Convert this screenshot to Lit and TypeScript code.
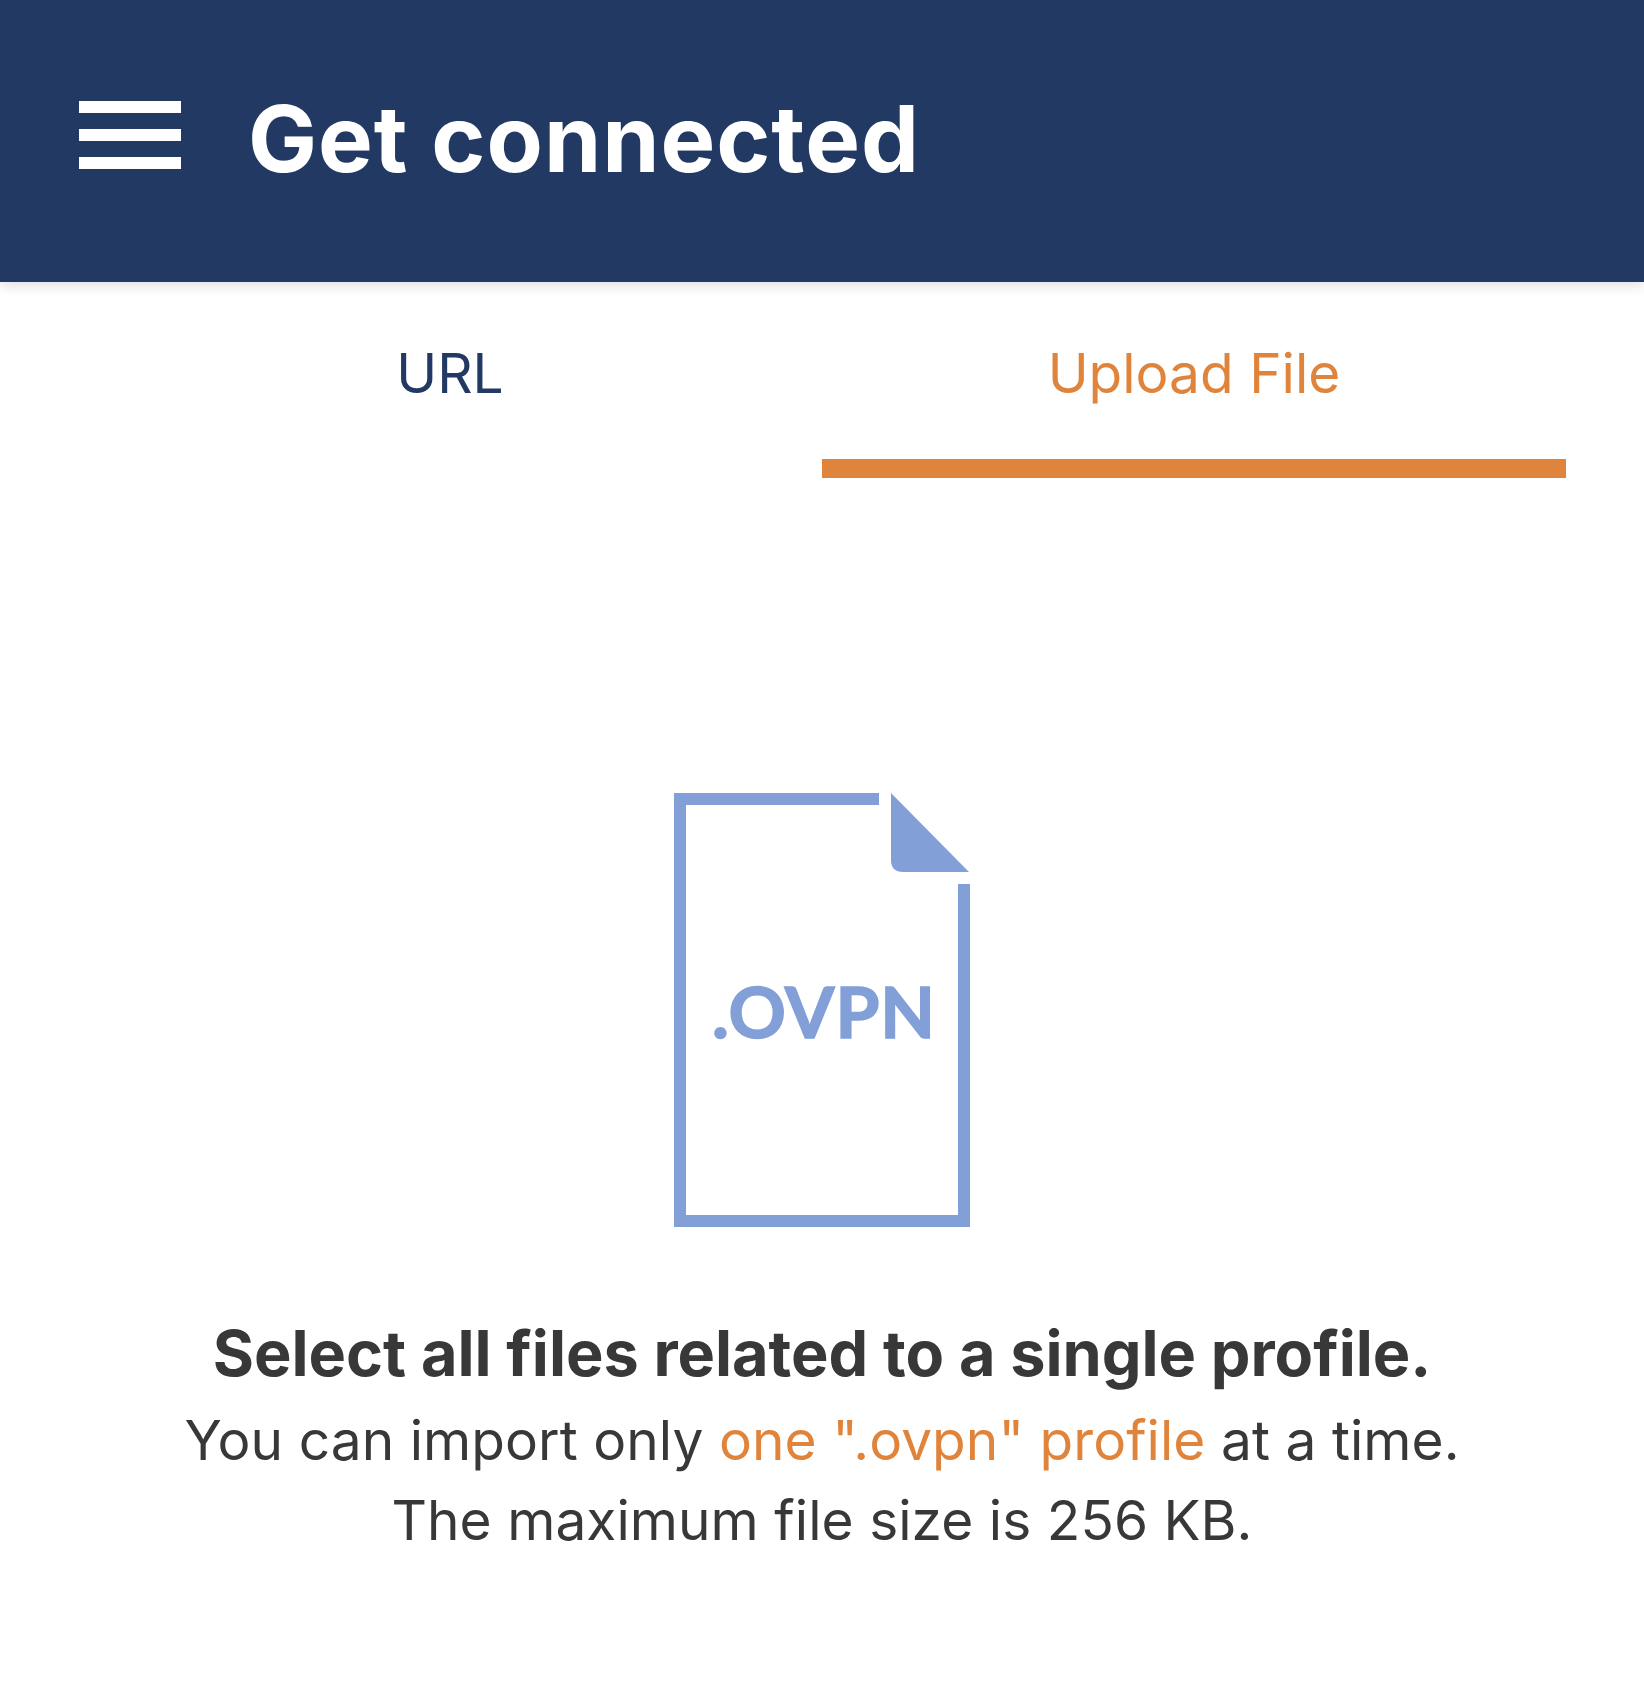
import { LitElement, html, css } from 'lit';
import { customElement } from 'lit/decorators.js';

@customElement('app-root')
export class AppRoot extends LitElement {
    static styles = css`
        :host {
            display: block;
            min-height: 1696px;
            background: #fff;
            font-family: 'Inter', 'Liberation Sans', sans-serif;
            color: #383838;
        }

        .header {
            display: flex;
            align-items: flex-start;
            gap: 67px;
            height: 282px;
            box-sizing: border-box;
            padding: 101px 0 0 79px;
            background: #223963;
            box-shadow: 0 4px 12px rgba(0, 0, 0, 0.12);
        }

        .menu {
            display: flex;
            flex-direction: column;
            gap: 16px;
            width: 102px;
        }

        .menu span {
            height: 12px;
            background: #fff;
        }

        .title {
            margin: -8px 0 0;
            font-size: 92px;
            line-height: 92px;
            font-weight: 650;
            letter-spacing: 1px;
            color: #fff;
        }

        .tabs {
            display: grid;
            grid-template-columns: 1fr 1fr;
            padding: 0 78px;
        }

        .tab {
            height: 196px;
            box-sizing: border-box;
            padding-top: 59px;
            border-bottom: 19px solid transparent;
            text-align: center;
            font-size: 55px;
            line-height: 64px;
            color: #223963;
        }

        .tab.active {
            color: #e0843b;
            border-bottom-color: #e0843b;
        }

        .content {
            display: flex;
            flex-direction: column;
            align-items: center;
            padding-top: 315px;
        }

        .file {
            display: block;
            width: 296px;
            height: 434px;
            fill: #829fd8;
        }

        .file text {
            font-family: 'Lato', 'Inter', sans-serif;
            font-size: 71px;
            font-weight: 700;
            letter-spacing: 1px;
            stroke: #829fd8;
            stroke-width: 1.6px;
        }

        .lead {
            margin: 86px 0 0;
            font-size: 63px;
            line-height: 80px;
            font-weight: 700;
            letter-spacing: -0.05px;
        }

        .note {
            margin: 7px 0 0;
            font-size: 55px;
            line-height: 80px;
            letter-spacing: 0.05px;
            text-align: center;
        }

        .note em {
            font-style: normal;
            color: #e0843b;
        }
    `;

    render() {
        return html`
            <div class="header">
                <div class="menu"><span></span><span></span><span></span></div>
                <h1 class="title">Get connected</h1>
            </div>
            <div class="tabs">
                <div class="tab">URL</div>
                <div class="tab active">Upload File</div>
            </div>
            <div class="content">
                <svg class="file" viewBox="0 0 296 434">
                    <path d="M0 0H205V12H12V422H284V91H296V434H0Z" />
                    <path d="M217 0L295 79H229Q217 79 217 67Z" />
                    <text x="150" y="245" text-anchor="middle">.OVPN</text>
                </svg>
                <p class="lead">Select all files related to a single profile.</p>
                <p class="note">
                    You can import only <em>one ".ovpn" profile</em> at a time.<br />
                    The maximum file size is 256 KB.
                </p>
            </div>
        `;
    }
}
